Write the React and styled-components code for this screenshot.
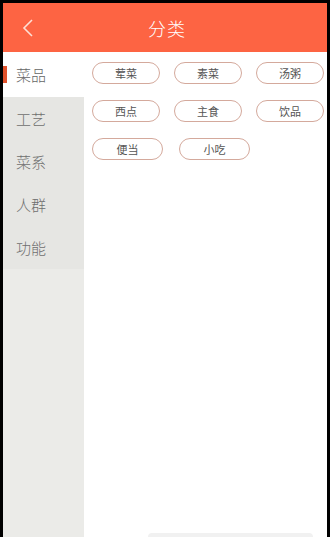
import React, { useState } from "react";
import styled, { createGlobalStyle } from "styled-components";

const GlobalStyle = createGlobalStyle`
  html, body {
    margin: 0;
    padding: 0;
    background: #000;
  }
  body {
    padding: 3px 3px 0 3px;
    font-family: "Noto Sans CJK SC", "Noto Sans", sans-serif;
  }
`;

const Screen = styled.div`
  width: 324px;
  height: 534px;
  background: #fff;
  display: flex;
  flex-direction: column;
  overflow: hidden;
  position: relative;
`;

const Header = styled.div`
  height: 49px;
  flex-shrink: 0;
  background: #fd6443;
  display: flex;
  align-items: center;
  justify-content: center;
  padding-left: 4px;
  position: relative;
`;

const BackButton = styled.div`
  position: absolute;
  left: 15px;
  top: 14px;
  width: 20px;
  height: 22px;
  display: flex;
  align-items: center;
  justify-content: center;
`;

const Title = styled.div`
  color: #fff;
  font-size: 18px;
  font-weight: 300;
  letter-spacing: 1px;
`;

const Body = styled.div`
  flex: 1;
  display: flex;
`;

const Sidebar = styled.div`
  width: 81px;
  background: #ebebe8;
  display: flex;
  flex-direction: column;
`;

const NavItem = styled.div`
  height: 43px;
  display: flex;
  align-items: center;
  padding-left: 13px;
  font-size: 15px;
  font-weight: 300;
  color: ${(p) => (p.$active ? "#666" : "#6f6f6f")};
  background: ${(p) => (p.$active ? "#fff" : "#e6e6e3")};
  position: relative;
  cursor: pointer;
  &:first-child {
    height: 45px;
  }
  &:before {
    content: "";
    display: ${(p) => (p.$active ? "block" : "none")};
    position: absolute;
    left: 0;
    top: 14px;
    width: 4px;
    height: 17px;
    background: #e0522c;
  }
`;

const Content = styled.div`
  flex: 1;
  padding: 10px 0 0 8px;
`;

const TagList = styled.div`
  display: flex;
  flex-wrap: wrap;
  column-gap: 14px;
  row-gap: 16px;
`;

const Tag = styled.div`
  width: ${(p) => (p.$wide ? "69px" : "66px")};
  margin-right: ${(p) => (p.$wide ? "2px" : "0")};
  height: 20px;
  border: 1.5px solid #d4a99c;
  border-radius: 12px;
  display: flex;
  align-items: center;
  justify-content: center;
  font-size: 11px;
  color: #555;
  cursor: pointer;
`;

const Toast = styled.div`
  position: absolute;
  left: 145px;
  bottom: -4px;
  width: 165px;
  height: 8px;
  border-radius: 4px;
  background: #f1f1f1;
`;

const navs = ["菜品", "工艺", "菜系", "人群", "功能"];
const tags = ["荤菜", "素菜", "汤粥", "西点", "主食", "饮品", "便当", "小吃"];

export default function App() {
  const [active, setActive] = useState(0);

  return (
    <>
      <GlobalStyle />
      <Screen>
        <Header>
          <BackButton>
            <svg width="12" height="20" viewBox="0 0 12 20">
              <path
                d="M10 2 L2 10 L10 18"
                fill="none"
                stroke="#fde0d6"
                strokeWidth="1.6"
              />
            </svg>
          </BackButton>
          <Title>分类</Title>
        </Header>
        <Body>
          <Sidebar>
            {navs.map((n, i) => (
              <NavItem
                key={n}
                $active={i === active}
                onClick={() => setActive(i)}
              >
                {n}
              </NavItem>
            ))}
          </Sidebar>
          <Content>
            <TagList>
              {tags.map((t, i) => (
                <Tag key={t} $wide={i >= 6}>
                  {t}
                </Tag>
              ))}
            </TagList>
          </Content>
        </Body>
        <Toast />
      </Screen>
    </>
  );
}
